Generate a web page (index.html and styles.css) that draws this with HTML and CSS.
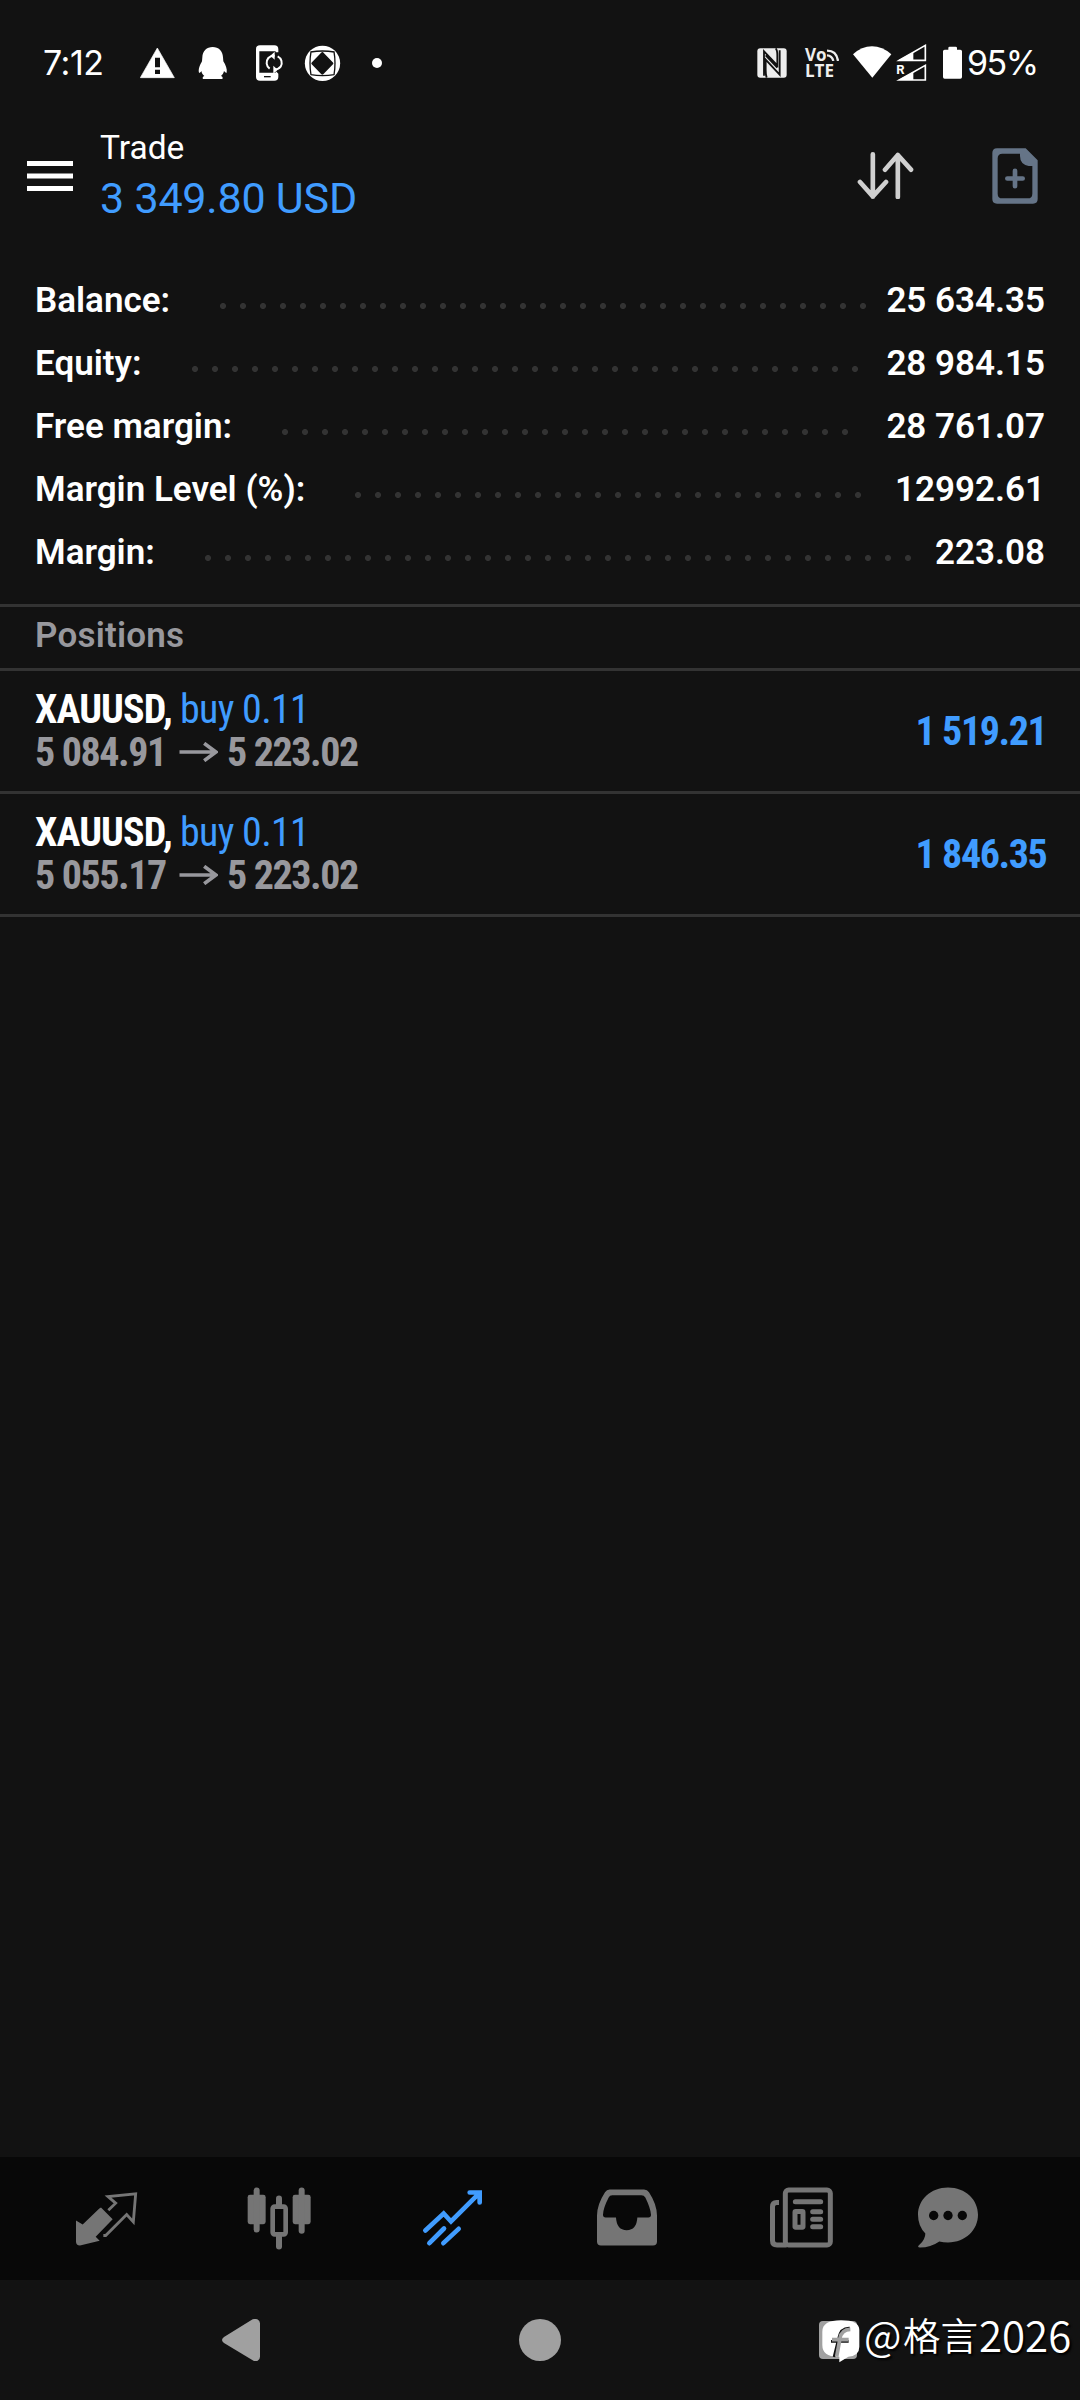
FILE: index.html
```html
<!DOCTYPE html>
<html lang="en">
<head>
<meta charset="utf-8">
<title>Trade</title>
<link rel="stylesheet" href="styles.css">
</head>
<body>
<div class="screen">
  <div class="status">
    <span class="clock">7:12</span>
    <svg class="s-warn" viewBox="420 66 105 126"><path d="M472 84L523 173H421Z" fill="#fff" stroke="#fff" stroke-width="2" stroke-linejoin="round"/><path d="M465 113h15v29h-15zM465 149h15v13h-15z" fill="#121212"/></svg>
    <svg class="s-qq" viewBox="594 66 90 126"><path d="M638 81C656 81 668 93 669 112L670 124C677 135 682 147 680 158C677 160 674 155 672 153C671 160 667 165 663 168C668 170 669 174 667 177H609C607 174 608 170 613 168C609 165 605 160 604 153C602 156 599 160 597 158C594 148 600 135 606 124L607 112C608 93 620 81 638 81Z" fill="#fff"/></svg>
    <svg class="s-phone" viewBox="765 66 87 126"><path d="M780 76H823Q835 76 835 88V97H827V94H778V158H827V153Q832 158 835 161V171Q835 182 823 182H780Q768 182 768 171V87Q768 76 780 76Z" fill="#fff"/><path d="M792 170H812" stroke="#121212" stroke-width="4"/><path d="M809 146A22 22 0 0 1 805 114Q812 106 824 107M833 109A22 22 0 0 1 842 140Q835 149 822 149" fill="none" stroke="#fff" stroke-width="6"/><path d="M824 95V119L811 107ZM820 137V161L833 149Z" fill="#fff"/></svg>
    <svg class="s-ring" viewBox="912 66 111 126"><circle cx="967.500" cy="130" r="53" fill="#fff"/><path d="M967 100L996 130L967 160L938 130Z" fill="#121212" stroke="#121212" stroke-width="8" stroke-linejoin="round"/><path d="M932 96Q967 90 1003 96M932 164Q967 170 1003 164M933 95Q927 130 933 165M1002 95Q1008 130 1002 165" fill="none" stroke="#121212" stroke-width="4"/></svg>
    <svg class="s-dot" viewBox="1113 66 36 126"><circle cx="1131" cy="129" r="15" fill="#fff"/></svg>
    <span class="spring"></span>
    <svg class="s-nfc" viewBox="78 66 96 126"><rect x="82" y="85" width="88" height="88" rx="9" fill="#eee"/><path d="M102 167V94L142 136V105Q142 90 137 85M110 173Q107 165 107 150V119L149 164V91M107 106L142 143" fill="none" stroke="#121212" stroke-width="5.500"/></svg>
    <div class="volte"><span>Vo</span><span>LTE</span><svg viewBox="0 0 36 36"><path d="M0 5Q29 5 33 36M0 19Q15 19 19 36" fill="none" stroke="#eee" stroke-width="7"/></svg></div>
    <svg class="s-wifi" viewBox="366 66 120 126"><path d="M369 103Q395 79 426 79T484 103L427 173Z" fill="#fff"/></svg>
    <svg class="s-sig" viewBox="498 66 93 126"><path d="M508 121L586 76V121ZM508 180L586 136V180Z" fill="none" stroke="#fff" stroke-width="5"/><path d="M505 121L550 96V121ZM505 180L550 156V180Z" fill="#fff"/><text class="roam" x="499" y="163">R</text></svg>
    <svg class="s-bat" viewBox="636 66 63 126"><path d="M655 89V84Q655 80 659 80H677Q681 80 681 84V89H691Q696 89 696 94V171Q696 176 691 176H644Q639 176 639 171V94Q639 89 644 89Z" fill="#fff"/></svg>
    <span class="percent">95%</span>
  </div>

  <header class="header">
    <svg class="menu" viewBox="27 160 46 32"><path d="M27 163.500H73M27 176H73M27 188.500H73" stroke="#fff" stroke-width="5"/></svg>
    <div class="titles">
      <div class="title">Trade</div>
      <div class="total">3 349.80 USD</div>
    </div>
    <svg class="sort" viewBox="380 397 171 141"><path d="M427.500 404V531M389 487L427.500 530L467 487M502.500 532V406M464 450L502.500 406L542 450" fill="none" stroke="#d0d0d0" stroke-width="14" stroke-linecap="round" stroke-linejoin="round"/></svg>
    <svg class="neworder" viewBox="786 384 138 168"><path fill="#657487" fill-rule="evenodd" d="M801 385H887L923 421V537Q923 551 909 551H801Q787 551 787 537V399Q787 385 801 385ZM817 401Q803 401 803 415V521Q803 535 817 535H893Q907 535 907 521V438H896Q870 433 870 408V401Z"/><path d="M832 475.500H878M855 452.500V498.500" stroke="#657487" stroke-width="14" stroke-linecap="round"/></svg>
  </header>

  <section class="summary">
    <div class="row"><span class="label">Balance:</span><i class="dots d33"></i><span class="value">25 634.35</span></div>
    <div class="row"><span class="label">Equity:</span><i class="dots d34"></i><span class="value">28 984.15</span></div>
    <div class="row"><span class="label">Free margin:</span><i class="dots d29"></i><span class="value">28 761.07</span></div>
    <div class="row"><span class="label">Margin Level (%):</span><i class="dots d26"></i><span class="value">12992.61</span></div>
    <div class="row"><span class="label">Margin:</span><i class="dots d36"></i><span class="value">223.08</span></div>
  </section>

  <h2 class="section">Positions</h2>
  <div class="position">
    <div class="info">
      <div class="line"><b class="cond">XAUUSD,</b><span class="cond side">buy 0.11</span></div>
      <div class="line grey"><span class="cond open">5 084.91</span><svg class="arrow" viewBox="0 0 116 60"><path d="M1 30H110M75 4L110 30L75 56" fill="none" stroke="#98989d" stroke-width="11"/></svg><span class="cond">5 223.02</span></div>
    </div>
    <div class="profit cond">1 519.21</div>
  </div>
  <div class="position">
    <div class="info">
      <div class="line"><b class="cond">XAUUSD,</b><span class="cond side">buy 0.11</span></div>
      <div class="line grey"><span class="cond open">5 055.17</span><svg class="arrow" viewBox="0 0 116 60"><path d="M1 30H110M75 4L110 30L75 56" fill="none" stroke="#98989d" stroke-width="11"/></svg><span class="cond">5 223.02</span></div>
    </div>
    <div class="profit cond">1 846.35</div>
  </div>

  <nav class="tabs">
    <span class="tab"><svg viewBox="93 130.500 210 210"><path d="M183 201L218 236L167 289L179 301L120 315Q108 315 108 304V240L128 252L178 204Z" fill="#757575"/><path d="M205 209L227 188L204 168L287 160L280 244L260 222L197 285H190" fill="none" stroke="#757575" stroke-width="8.500"/></svg></span>
    <span class="tab"><svg viewBox="615 130.500 210 210"><g fill="#757575"><rect x="623" y="163" width="54" height="88" rx="7"/><rect x="641" y="141" width="18" height="135" rx="9"/><rect x="758" y="163" width="54" height="88" rx="7"/><rect x="776" y="141" width="18" height="139" rx="9"/><rect x="708" y="165" width="18" height="36" rx="9"/><rect x="708" y="280" width="18" height="47" rx="9"/></g><rect x="698" y="198.500" width="39" height="83" rx="6" fill="none" stroke="#757575" stroke-width="14"/></svg></span>
    <span class="tab"><svg viewBox="1137 130.500 210 210"><path d="M1156 270L1211 219L1233 243L1318 158M1289 156H1319V186M1168 308L1212 264M1210 308L1256 265" fill="none" stroke="#409cff" stroke-width="14" stroke-linecap="round" stroke-linejoin="miter"/></svg></span>
    <span class="tab"><svg viewBox="99 130.500 210 210"><path fill="#757575" fill-rule="evenodd" d="M149 147H252Q262 147 267 155Q291 192 291 225V303Q291 315 279 315H123Q111 315 111 303V225Q111 192 135 155Q140 147 149 147ZM157 164Q149 164 146 171Q129 204 129 223Q129 231 137 231H168Q170 269 200 269T232 231H265Q273 231 273 223Q272 204 256 171Q252 164 244 164Z"/></svg></span>
    <span class="tab"><svg viewBox="621 130.500 210 210"><g fill="none" stroke="#757575" stroke-width="15"><rect x="676" y="148.500" width="135" height="165" rx="10"/><path d="M657 186H650Q637.500 186 637.500 199V300Q637.500 313.500 651 313.500H680"/><rect x="705" y="213" width="24" height="47" rx="2"/><path stroke-linecap="round" d="M706 184H782M758 214H782M758 236H782M758 259H782"/></g></svg></span>
    <span class="tab last"><svg viewBox="1059 130.500 210 210"><path d="M1164 141C1217 141 1254 178 1254 223S1217 306 1164 306Q1150 306 1138 303Q1112 321 1080 321Q1069 320 1079 312Q1096 297 1096 279Q1074 257 1074 223C1074 178 1112 141 1164 141Z" fill="#757575"/><g fill="#080808"><circle cx="1121" cy="225" r="14"/><circle cx="1164" cy="225" r="14"/><circle cx="1207" cy="225" r="14"/></g></svg></span>
  </nav>
  <div class="system">
    <svg class="back" viewBox="66 117 114 126"><path d="M158 118Q165 115 172 118Q180 122 180 130V230Q180 239 173 242Q164 245 158 241L72 189Q60 180 72 171Z" fill="#a0a0a0"/></svg>
    <span class="home"></span>
    <span class="recent"></span>
  </div>
  <div class="mark">
    <svg viewBox="126 150 114 129"><path d="M183 151Q238 151 238 180V230Q238 257 205 260L178 277V260Q127 262 127 225V185Q127 151 183 151Z" fill="#fff"/><path d="M162 261L176 204Q182 173 209 174M153 214H206" fill="none" stroke="#111" stroke-width="8"/><path d="M170 260L180 205Q184 179 211 178M156 209H206" fill="none" stroke="#a0a0a0" stroke-width="11"/></svg>
    <span class="at">@</span><span class="han">格言</span><span class="year">2026</span>
  </div>
</div>
</body>
</html>
```
FILE: styles.css
```css
* { box-sizing: border-box; }
body { margin: 0; background: #121212; color: #fff; font-family: Roboto, sans-serif; }
.screen { position: relative; width: 1080px; height: 2400px; display: flex; flex-direction: column; overflow: hidden; white-space: nowrap; }
svg { display: block; flex: none; }

.status { height: 126px; display: flex; align-items: center; padding: 0 44px 0 43px; }
.status svg { height: 42px; }
.clock, .percent { font-family: Inter, sans-serif; font-size: 34px; line-height: 42px; }
.clock { width: 97px; letter-spacing: -0.5px; }
.s-warn { width: 35px; margin-right: 23px; }
.s-qq { width: 30px; margin-right: 27px; }
.s-phone { width: 29px; margin-right: 20px; }
.s-ring { width: 37px; margin-right: 30px; }
.s-dot { width: 12px; }
.spring { flex: 1; }
.s-nfc { width: 32px; margin-right: 17px; }
.volte { position: relative; width: 35px; height: 33px; margin-right: 12px; display: flex; flex-direction: column; font: 700 17px/16px "Open Sans", sans-serif; color: #eee; }
.status .volte svg { position: absolute; left: 22px; top: 2px; width: 12px; height: 12px; }
.s-wifi { width: 40px; margin-right: 4px; }
.s-sig { width: 31px; margin-right: 15px; }
.s-bat { width: 21px; margin-right: 4px; }
.roam { font: 700 39px Roboto, sans-serif; fill: #fff; }
.percent { width: 69px; letter-spacing: -1.5px; }

.header { height: 143px; display: flex; align-items: flex-start; padding-left: 27px; }
.menu { width: 46px; height: 32px; margin-top: 34px; }
.titles { flex: 1; margin-left: 27px; }
.title { font-size: 33.5px; line-height: 44px; }
.total { font-size: 43px; line-height: 57px; letter-spacing: -0.2px; color: #409cff; }
.sort { width: 57px; height: 47px; margin: 26px 78px 0 0; }
.neworder { width: 46px; height: 56px; margin: 22px 42px 0 0; }

.summary { height: 335px; padding: 0 35px 0 35px; font-size: 35px; font-weight: 650; }
.row { height: 63px; display: flex; align-items: center; line-height: 63px; }
.label { margin-right: 43px; }
.dots { height: 6px; margin-top: 11px; background: radial-gradient(circle at center, #333 2.6px, transparent 3.4px) 0 0 / 20px 6px; }
.d26 { width: 520px; }
.d29 { width: 580px; }
.d33 { width: 660px; }
.d34 { width: 680px; }
.d36 { width: 720px; }
.value { margin-left: auto; }

.section { margin: 0; height: 67px; padding: 0 35px 3px; border: solid #333; border-width: 3px 0; font-size: 35px; line-height: 58px; font-weight: 600; letter-spacing: 0.2px; color: #98989d; }
.position { height: 123px; padding: 0 35px 0 35px; border-bottom: 3px solid #333; display: flex; justify-content: space-between; align-items: center; font-size: 40px; line-height: 43px; }
.info { height: 86px; }
.line { display: flex; align-items: center; height: 43px; }
.cond { font-family: "Roboto Condensed", Roboto, sans-serif; font-stretch: 75%; }
.line b { font-weight: 700; width: 145px; letter-spacing: -0.9px; }
.side { color: #409cff; letter-spacing: -0.7px; }
.grey { color: #98989d; font-weight: 700; letter-spacing: -1.4px; }
.open { width: 144px; }
.arrow { width: 39px; height: 20px; margin: 0 9px 2px 0; }
.profit { margin-right: -1.4px; font-weight: 700; letter-spacing: -1.4px; color: #409cff; }

.tabs { margin-top: auto; height: 123px; background: #080808; display: flex; align-items: center; padding-left: 19px; }
.tab { width: 174px; display: flex; justify-content: center; }
.tab.last { width: 118px; }
.tab svg { width: 70px; height: 70px; }
.system { height: 120px; display: flex; align-items: center; padding-left: 222px; }
.back { width: 38px; height: 42px; }
.home { width: 42px; height: 42px; margin-left: 259px; border-radius: 50%; background: #a0a0a0; }
.recent { width: 38px; height: 38px; margin-left: 258px; border-radius: 4px; background: #a0a0a0; }
.mark { position: absolute; left: 822px; top: 2307px; height: 54px; display: flex; line-height: 54px; font-family: "Noto Sans CJK SC", sans-serif; font-weight: 350; text-shadow: 2px 2px 2px #000; }
.mark svg { width: 38px; height: 43px; margin: 13px 4px 0 0; }
.at { font-size: 40px; width: 39px; }
.han { font-size: 37.5px; width: 76px; }
.year { font-size: 42px; }
```
